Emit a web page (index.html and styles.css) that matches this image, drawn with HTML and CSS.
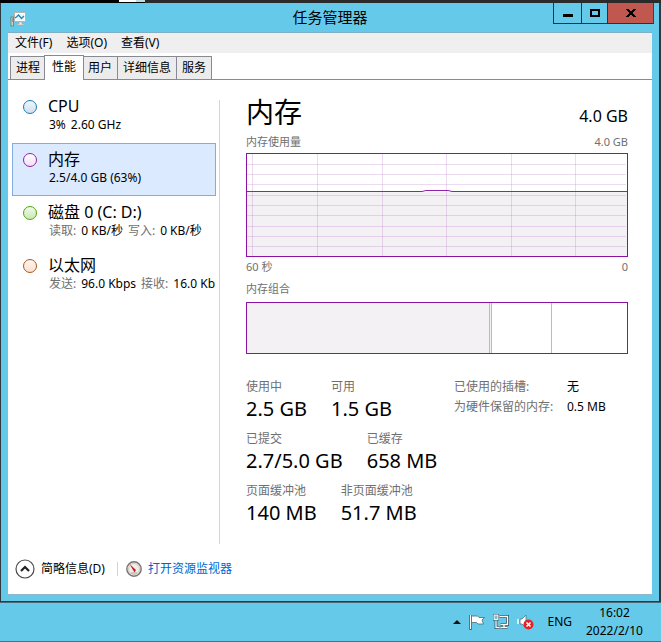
FILE: index.html
```html
<!DOCTYPE html>
<html lang="zh-CN">
<head>
<meta charset="utf-8">
<meta name="viewport" content="width=device-width, initial-scale=1">
<title>任务管理器</title>
<link rel="stylesheet" href="styles.css">
</head>
<body>
<div class="backdrop"><span class="backdrop-light"></span><span class="backdrop-pale"></span></div>
<main class="window">
  <header class="titlebar">
    <svg class="app-icon" width="17" height="16" viewBox="0 0 17 16">
      <rect x="4.500" y="1.500" width="11" height="9" fill="#fff" stroke="#b9b4ae"/>
      <rect x="6" y="3" width="8" height="6" fill="#e9f8ff"/>
      <path d="M5 7l2-1.500 1.500-1.500 3 3.500L14 5" fill="none" stroke="#2387b8" stroke-width="1.300"/>
      <path d="M9 11h3v2h2v1H7v-1h2z" fill="#eee" stroke="#aaa6a1" stroke-width=".6"/>
      <rect x="1" y="6" width="2.500" height="9" fill="#d4d0ca" stroke="#77736c" stroke-width=".8"/>
      <path d="M2 8h1M2 10h1" stroke="#65645f"/>
    </svg>
    <h1 class="title">任务管理器</h1>
    <div class="controls">
      <button class="control minimize" aria-label="最小化"><svg width="12" height="12" viewBox="0 0 12 12"><path d="M1 7h10v3H1z"/></svg></button>
      <button class="control maximize" aria-label="最大化"><svg width="12" height="12" viewBox="0 0 12 12"><path d="M2 3h8v6H2z" fill="none" stroke="#000" stroke-width="2"/></svg></button>
      <button class="control close" aria-label="关闭"><svg width="12" height="12" viewBox="0 0 12 12"><path d="M1 2h3v1h1v1h2V3h1V2h3v1h-1v1H9v1H8v2h1v1h1v1h1v1H8V9H7V8H5v1H4v1H1V9h1V8h1V7h1V5H3V4H2V3H1z"/></svg></button>
    </div>
  </header>
  <div class="client">
    <nav class="menu">
      <button>文件(F)</button><button>选项(O)</button><button>查看(V)</button>
    </nav>
    <div class="tabs" role="tablist">
      <button role="tab">进程</button><button role="tab" class="active" aria-selected="true">性能</button><button role="tab">用户</button><button role="tab">详细信息</button><button role="tab">服务</button>
    </div>
    <div class="content">
      <aside class="sidebar">
        <button class="resource cpu"><span class="dot"></span><span class="info"><span class="name">CPU</span><span class="detail"><span>3%</span><span>2.60 GHz</span></span></span></button>
        <button class="resource memory selected"><span class="dot"></span><span class="info"><span class="name">内存</span><span class="detail">2.5/4.0 GB (63%)</span></span></button>
        <button class="resource disk"><span class="dot"></span><span class="info"><span class="name">磁盘 0 (C: D:)</span><span class="detail"><span class="key">读取:</span><span>0 KB/秒</span><span class="key">写入:</span><span>0 KB/秒</span></span></span></button>
        <button class="resource network"><span class="dot"></span><span class="info"><span class="name">以太网</span><span class="detail"><span class="key">发送:</span><span>96.0 Kbps</span><span class="key">接收:</span><span>16.0 Kb</span></span></span></button>
      </aside>
      <section class="panel">
        <div class="heading"><h2>内存</h2><span class="total">4.0 GB</span></div>
        <div class="caption"><span>内存使用量</span><span>4.0 GB</span></div>
        <svg class="graph" viewBox="0 0 380 102" preserveAspectRatio="none">
          <rect y="38" width="380" height="64" fill="#f3f1f4"/>
          <path d="M0 10.500h379M0 20.500h379M0 30.500h379M0 41.500h379M0 51.500h379M0 61.500h379M0 72.500h379M0 82.500h379M0 92.500h379M5.500 0v102M70.500 0v102M135.500 0v102M199.500 0v102M264.500 0v102M328.500 0v102" fill="none" stroke="#b46ac4" stroke-opacity=".25"/>
          <path d="M0 37.500h175l4-1h22l4 1h175" fill="none" stroke="#951fae"/>
        </svg>
        <div class="caption axis"><span>60 秒</span><span>0</span></div>
        <div class="caption composition-label"><span>内存组合</span></div>
        <div class="composition"><span class="used"></span><span class="modified"></span><span class="standby"></span><span class="free"></span></div>
        <div class="stats">
          <div class="figures">
            <dl class="pair"><div><dt>使用中</dt><dd>2.5 GB</dd></div><div><dt>可用</dt><dd>1.5 GB</dd></div></dl>
            <dl class="pair"><div><dt>已提交</dt><dd>2.7/5.0 GB</dd></div><div><dt>已缓存</dt><dd>658 MB</dd></div></dl>
            <dl class="pair"><div><dt>页面缓冲池</dt><dd>140 MB</dd></div><div><dt>非页面缓冲池</dt><dd>51.7 MB</dd></div></dl>
          </div>
          <dl class="hardware"><dt>已使用的插槽:</dt><dd>无</dd><dt>为硬件保留的内存:</dt><dd>0.5 MB</dd></dl>
        </div>
      </section>
    </div>
    <footer class="footer">
      <button class="fewer"><svg width="20" height="20" viewBox="0 0 20 20"><circle cx="10" cy="10" r="9" fill="#fff" stroke="#4a4a4a" stroke-width="1.200"/><path d="M6 12l4-4 4 4" fill="none" stroke="#222" stroke-width="2.200"/></svg>简略信息(D)</button>
      <span class="divider"></span>
      <a class="monitor" href="#monitor"><svg width="16" height="16" viewBox="0 0 16 16"><circle cx="8" cy="8" r="7.200" fill="#f0eeea" stroke="#77736f" stroke-width="1.400"/><circle cx="8" cy="8" r="5.500" fill="none" stroke="#c5bfb7" stroke-width=".8"/><path d="M3.500 3l6.500 6-1.500 2.500z" fill="#d51620"/><path d="M5 12h6" stroke="#aaa49c"/></svg>打开资源监视器</a>
    </footer>
  </div>
</main>
<div class="taskbar">
  <button class="tray" aria-label="显示隐藏的图标"><svg width="8" height="16" viewBox="0 0 8 16"><path d="M0 10l4-4 4 4z" fill="#111"/></svg></button>
  <button class="tray" aria-label="操作中心"><svg width="16" height="16" viewBox="0 0 16 16"><path d="M1.500 1v15" stroke="#445c65" stroke-width="2.400"/><path d="M2.500 2h6l1.500 1.500h5.500L13 6l1.500 4H9L7.500 8.500h-5z" fill="#fff" stroke="#446b79" stroke-width=".8"/><path d="M1.500 1v14" stroke="#fff"/></svg></button>
  <button class="tray" aria-label="网络"><svg width="16" height="16" viewBox="0 0 16 16"><path d="M6.500 2.500h8v8h-7M11 11v2M7.500 13.500h7M3 5.500v8h3.500" fill="none" stroke="#31515d" stroke-width="2.800"/><path d="M6.500 2.500h8v8h-7M11 11v2M7.500 13.500h7M3 5.500v8h3.500" fill="none" stroke="#fff" stroke-width="1.300"/><rect x="1" y="1" width="4" height="4.500" fill="#65caea" stroke="#31515d" stroke-width="2"/><rect x="1" y="1" width="4" height="4.500" fill="#8bb9c8" stroke="#fff"/></svg></button>
  <button class="tray" aria-label="音量"><svg width="17" height="16" viewBox="0 0 17 16"><path d="M1 5v5" stroke="#fff" stroke-width="1.500"/><path d="M3 5h2l4-4v13l-4-4H3z" fill="#fff" stroke="#4b737f" stroke-width=".8"/><circle cx="11.500" cy="10.500" r="5" fill="#df232b"/><path d="M9.500 8.500l4 4m0-4l-4 4" stroke="#fff" stroke-width="1.700"/></svg></button>
  <button class="language">ENG</button>
  <div class="clock"><time>16:02</time><time>2022/2/10</time></div>
</div>
</body>
</html>
```
FILE: styles.css
```css
* { box-sizing: border-box; }

body {
  margin: 0;
  min-height: 100vh;
  display: flex;
  flex-direction: column;
  background: #65caea;
  color: #000;
  font: 12px/16px "Noto Sans", "Noto Sans CJK SC", sans-serif;
}

button {
  margin: 0;
  padding: 0;
  border: 0;
  background: none;
  color: inherit;
  font: inherit;
  white-space: nowrap;
}

h1, h2, dl, dd { margin: 0; font-weight: 400; }
svg { display: block; flex: none; }

.backdrop {
  display: flex;
  height: 3px;
  padding-left: 119px;
  background: linear-gradient(90deg, #000 145px, #2b2b2b 145px);
}
.backdrop-light { width: 17px; height: 2px; background: #fff; }
.backdrop-pale { width: 9px; height: 2px; background: #b9dfe8; }

.window {
  flex: 1;
  display: flex;
  flex-direction: column;
  padding: 0 7px 6px;
  border: 1px solid #303840;
  border-top: 0;
  border-right-width: 2px;
}

.titlebar {
  display: grid;
  grid-template-columns: 1fr auto 1fr;
  height: 30px;
  border-bottom: 1px solid #7fafc4;
}
.app-icon { margin: 8px 0 0 2px; }
.title { font-size: 15px; line-height: 29px; }
.controls { display: flex; justify-content: flex-end; align-items: flex-start; }
.control {
  display: grid;
  place-items: center;
  width: 28px;
  height: 21px;
  border: 1px solid #27333a;
  border-top: 0;
  border-right: 0;
}
.maximize { width: 26px; }
.close { width: 47px; margin-right: -2px; border-right: 1px solid #5d3334; background: #c1584f; }

.client { flex: 1; display: flex; flex-direction: column; background: #fff; border-bottom: 1px solid #8fb9c8; }

.menu { display: flex; gap: 14px; height: 20px; padding-left: 7px; background: #efefef; }

.tabs {
  display: flex;
  align-items: flex-end;
  height: 27px;
  padding: 0 2px;
  border-bottom: 1px solid #898994;
}
.tabs button {
  height: 23px;
  padding: 0 5px;
  border: 1px solid #898994;
  border-left-width: 0;
  border-bottom: 0;
  background: #ececec;
}
.tabs button:first-child { padding-right: 4px; border-left-width: 1px; border-right: 0; }
.tabs button.active {
  height: 25px;
  margin-bottom: -1px;
  padding: 0 7px 3px;
  border-left-width: 1px;
  background: #fff;
}
.tabs .active + button { padding: 0 5px 0 4px; }

.content { flex: 1; display: grid; grid-template-columns: 212px minmax(0, 1fr); }
.sidebar {
  padding: 10px 0 0 4px;
  overflow: hidden;
  background: linear-gradient(#d4d4d4, #d4d4d4) right 20px / 1px 100% no-repeat;
}
.resource {
  display: flex;
  align-items: flex-start;
  gap: 11px;
  width: 100%;
  height: 53px;
  padding: 8px 0 0 11px;
  text-align: left;
}
.resource.selected {
  width: calc(100% - 4px);
  padding: 7px 0 0 10px;
  border: 1px solid #82ade0;
  background: #dceaff;
}
.dot { flex: none; width: 14px; height: 14px; margin-top: 2px; border: 1px solid; border-radius: 50%; }
.cpu .dot { border-color: #187db8; background: linear-gradient(#f1f6fb, #cfe0ee); }
.memory .dot { border-color: #951fae; background: linear-gradient(#fff, #f0dff4); }
.disk .dot { border-color: #4da60c; background: linear-gradient(#f1faea, #c8eab5); }
.network .dot { border-color: #a85a20; background: linear-gradient(#fff5ef, #fae0d0); }
.name { display: block; font-size: 16px; line-height: 16px; }
.detail { display: flex; gap: 5px; line-height: 22px; padding-left: 1px; }
.detail .key { color: #707070; }

.panel { padding: 14px 24px 0 26px; }
.heading { display: flex; justify-content: space-between; height: 40px; }
.heading h2 { font-size: 28px; line-height: 36px; }
.total { font-size: 16px; line-height: 44px; }
.caption { display: flex; justify-content: space-between; height: 19px; color: #707070; font-size: 11px; }
.graph { display: block; width: 100%; height: 104px; border: 1px solid #8b12a5; background: #fff; }
.axis { height: 24px; padding-top: 2px; }
.composition-label { height: 21px; }
.composition {
  display: grid;
  grid-template-columns: 242fr 3fr 59fr 76fr;
  height: 52px;
  border: 1px solid #8b12a5;
}
.composition span + span { border-left: 1px solid #cbaed4; }
.used { background: #f3f1f4; }
.modified { border-right: 1px solid #cbaed4; background: #f3f1f4; }
.composition .standby { border-left: 0; }

.stats { display: flex; justify-content: space-between; padding-top: 25px; }
.pair { display: flex; gap: 24px; height: 52px; }
.pair dt, .hardware dt { color: #707070; }
.pair dd { font-size: 20px; line-height: 28px; white-space: nowrap; }
.hardware {
  display: grid;
  grid-template-columns: 113px 61px;
  grid-auto-rows: 20px;
  align-content: start;
  white-space: nowrap;
}

.footer { display: flex; align-items: center; gap: 8px; height: 50px; padding-left: 7px; }
.fewer, .monitor { display: flex; align-items: center; gap: 6px; }
.divider { width: 1px; height: 14px; margin-left: 4px; background: #d4d4d4; }
.monitor { color: #0066cc; text-decoration: none; }

.taskbar {
  display: flex;
  align-items: center;
  justify-content: flex-end;
  gap: 8px;
  height: 40px;
  padding-right: 16px;
  border-top: 1px solid #4b6874;
  border-bottom: 1px solid #526e79;
}
.language { margin-left: 5px; }
.clock { display: grid; margin-left: 4px; min-width: 61px; line-height: 18px; text-align: center; }
```
